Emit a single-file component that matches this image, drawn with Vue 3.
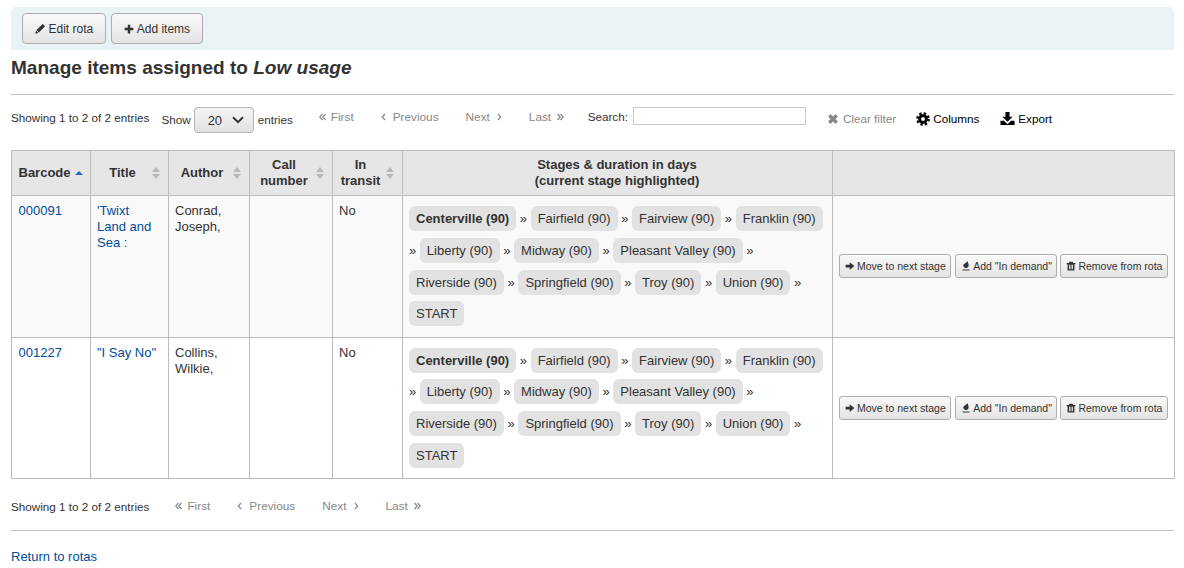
<template>
  <div class="page">
    <div class="toolbar">
      <button class="btn">
        <svg class="ico" viewBox="0 0 16 16"><path d="M11.200 1.300l3.500 3.500-9 9-3.500-3.500zM1.500 11l3.500 3.500-4.600 1.100z" /></svg>
        Edit rota
      </button>
      <button class="btn">
        <svg class="ico" viewBox="0 0 16 16"><path d="M6 1h4v5h5v4h-5v5H6v-5H1V6h5z" /></svg>
        Add items
      </button>
    </div>

    <h1>Manage items assigned to <em>Low usage</em></h1>
    <hr class="rule-top" />

    <div class="controls">
      <div class="info">Showing 1 to 2 of 2 entries</div>
      <label class="show">Show</label>
      <div class="select">
        <span>20</span>
        <svg viewBox="0 0 12 8" width="12" height="8"><path d="M1 1.200l5 5 5-5" fill="none" stroke="#333" stroke-width="2" /></svg>
      </div>
      <label class="entries">entries</label>
      <div class="pager pager-top">
        <a v-for="p in pages" :key="p.label" class="page-link" :class="p.cls">
          <svg v-if="p.before" class="chev" :class="{ wide: p.double }" :viewBox="p.double ? '0 0 7 8' : '0 0 5 8'">
            <path :d="p.d" />
          </svg>
          <span>{{ p.label }}</span>
          <svg v-if="p.after" class="chev" :class="{ wide: p.double }" :viewBox="p.double ? '0 0 7 8' : '0 0 5 8'">
            <path :d="p.d" />
          </svg>
        </a>
      </div>
      <label class="search">Search:</label>
      <input class="search-box" type="text" />
      <a class="tool clear">
        <svg class="ico tool-ico clear-ico" viewBox="0 0 16 16"><path d="M3 3l10 10M13 3L3 13" fill="none" stroke="currentColor" stroke-width="4.600" /></svg>
        Clear filter
      </a>
      <a class="tool columns">
        <svg class="ico tool-ico" viewBox="0 0 16 16">
          <circle cx="8" cy="8" r="5.500" />
          <circle cx="8" cy="8" r="6.400" fill="none" stroke="#000" stroke-width="2.800" stroke-dasharray="2.700 2.330" />
          <circle cx="8" cy="8" r="2.200" fill="#fff" />
        </svg>
        Columns
      </a>
      <a class="tool export">
        <svg class="ico tool-ico export-ico" viewBox="0 0 16 16"><path d="M5.800 1h4.400v5h3.300L8 11.400 2.500 6h3.300zM.5 10.500h3.800L8 14l3.700-3.500h3.800V15H.5z" /></svg>
        Export
      </a>
    </div>

    <table>
      <colgroup>
        <col v-for="w in colWidths" :key="w" :style="{ width: w + 'px' }" />
      </colgroup>
      <thead>
        <tr>
          <th class="left">Barcode <i class="sort-up"></i></th>
          <th class="sortable">Title<span class="sorter"></span></th>
          <th class="sortable">Author<span class="sorter"></span></th>
          <th class="sortable">Call<br />number<span class="sorter"></span></th>
          <th class="sortable">In<br />transit<span class="sorter"></span></th>
          <th class="stages-head">Stages &amp; duration in days<br />(current stage highlighted)</th>
          <th></th>
        </tr>
      </thead>
      <tbody>
        <tr v-for="item in items" :key="item.barcode">
          <td class="first"><a class="link">{{ item.barcode }}</a></td>
          <td><a class="link">{{ item.title }}</a></td>
          <td>{{ item.author }}</td>
          <td></td>
          <td>No</td>
          <td class="stages">
            <template v-for="(s, i) in stages" :key="s">
              <span class="pill" :class="{ current: i === 0 }">{{ s }}</span>
              <template v-if="i < stages.length - 1"> » </template>
            </template>
          </td>
          <td class="actions">
            <button class="btn btn-xs">
              <svg class="ico" viewBox="0 0 16 16"><path d="M1 5.800h6.500V1.800L15 8l-7.500 6.200v-4H1z" /></svg>
              Move to next stage
            </button>
            <button class="btn btn-xs">
              <svg class="ico" viewBox="0 0 16 16"><path d="M10.500 0c.4 3 1.800 4.500 1.800 6.800 0 2.600-2 4.400-4.300 4.400S3.700 9.400 3.700 7.200C3.700 4.500 8 3.500 10.500 0zM2.500 13.500h11V15h-11z" /></svg>
              Add "In demand"
            </button>
            <button class="btn btn-xs">
              <svg class="ico" viewBox="0 0 16 16"><path fill-rule="evenodd" d="M5.500 1h5l1 2H15v2h-1.500v10h-11V5H1V3h3.500zM4.800 6v7h1.400V6zM7.300 6v7h1.400V6zM9.800 6v7h1.400V6z" /></svg>
              Remove from rota
            </button>
          </td>
        </tr>
      </tbody>
    </table>

    <div class="controls-bottom">
      <div class="info">Showing 1 to 2 of 2 entries</div>
      <div class="pager pager-bottom">
        <a v-for="p in pages" :key="p.label" class="page-link" :class="p.cls">
          <svg v-if="p.before" class="chev" :class="{ wide: p.double }" :viewBox="p.double ? '0 0 7 8' : '0 0 5 8'">
            <path :d="p.d" />
          </svg>
          <span>{{ p.label }}</span>
          <svg v-if="p.after" class="chev" :class="{ wide: p.double }" :viewBox="p.double ? '0 0 7 8' : '0 0 5 8'">
            <path :d="p.d" />
          </svg>
        </a>
      </div>
    </div>
    <hr class="rule-bottom" />
    <a class="link back">Return to rotas</a>
  </div>
</template>

<script setup>
const colWidths = [79, 78, 81, 83, 70, 430, 342]

const pages = [
  { label: 'First', before: true, double: true, cls: 'first-page', d: 'M3.500 1L.8 4l2.700 3M6.500 1L3.800 4l2.700 3' },
  { label: 'Previous', before: true, cls: 'prev-page', d: 'M4 1L1.300 4 4 7' },
  { label: 'Next', after: true, cls: 'next-page', d: 'M1 1l2.700 3L1 7' },
  { label: 'Last', after: true, double: true, cls: 'last-page', d: 'M.5 1l2.700 3-2.700 3M3.500 1l2.700 3-2.700 3' }
]

const stages = [
  'Centerville (90)', 'Fairfield (90)', 'Fairview (90)', 'Franklin (90)',
  'Liberty (90)', 'Midway (90)', 'Pleasant Valley (90)',
  'Riverside (90)', 'Springfield (90)', 'Troy (90)', 'Union (90)', 'START'
]

const items = [
  { barcode: '000091', title: "'Twixt Land and Sea :", author: 'Conrad, Joseph,' },
  { barcode: '001227', title: '"I Say No"', author: 'Collins, Wilkie,' }
]
</script>

<style scoped>
.page {
  width: 1184px;
  height: 568px;
  overflow: hidden;
  padding: 7px 10px 0 11px;
  box-sizing: border-box;
  font-family: "Liberation Sans", Arial, sans-serif;
  font-size: 13px;
  color: #333;
  background: #fff;
}

.toolbar {
  display: flex;
  gap: 5.500px;
  height: 43px;
  padding: 6px 11px 0;
  box-sizing: border-box;
  background: #e9f2f4;
  border-radius: 5px 5px 0 0;
}

.toolbar .btn + .btn .ico {
  width: 10px;
  height: 10px;
}

.btn {
  display: inline-flex;
  align-items: center;
  justify-content: center;
  gap: 2.500px;
  height: 31px;
  padding: 0 11.500px 0 12px;
  font-family: inherit;
  font-size: 12px;
  color: #333;
  background: linear-gradient(#f9f9f9, #e4e4e4);
  border: 1px solid #adadad;
  border-radius: 4px;
  white-space: nowrap;
}

.ico {
  width: 11px;
  height: 11px;
  fill: currentColor;
  flex: none;
}

h1 {
  margin: 7px 0 0;
  font-size: 19.050px;
  line-height: 22px;
  font-weight: bold;
  color: #333;
}

.rule-top {
  margin: 15px 0 0;
  border: 0;
  border-top: 1px solid #c0c0c0;
}

.controls {
  display: flex;
  align-items: flex-start;
  height: 55px;
  font-size: 11.700px;
}

.info {
  margin-top: 16px;
  line-height: 14px;
  white-space: nowrap;
}

.show {
  margin: 18px 0 0 12px;
  line-height: 14px;
}

.select {
  display: flex;
  align-items: center;
  justify-content: space-between;
  width: 60px;
  height: 26px;
  margin: 12px 0 0 3px;
  padding: 0 9px 0 13px;
  box-sizing: border-box;
  font-size: 13px;
  background: linear-gradient(#f5f5f5, #e2e2e2);
  border: 1px solid #b8b8b8;
  border-radius: 4px;
}

.entries {
  margin: 18px 0 0 4px;
  line-height: 14px;
}

.pager {
  display: flex;
  gap: 27px;
  font-size: 11.800px;
  line-height: 14px;
}

.pager-top {
  margin: 15px 0 0 26px;
}

.page-link {
  display: flex;
  align-items: center;
  color: #888;
  white-space: nowrap;
}

.chev {
  width: 5px;
  height: 8px;
  fill: none;
  stroke: #888;
  stroke-width: 1.200;
}

.chev.wide {
  width: 7px;
}

.first-page .chev {
  margin-right: 5px;
}

.prev-page .chev {
  margin-right: 7px;
}

.next-page .chev {
  margin-left: 7px;
}

.last-page .chev {
  margin-left: 6px;
}

.search {
  margin: 15px 0 0 23.500px;
  line-height: 14px;
}

.search-box {
  width: 173px;
  height: 18px;
  margin: 12px 0 0 5px;
  padding: 0;
  box-sizing: border-box;
  border: 1px solid #c8c8c8;
  background: #fff;
}

.tool {
  display: inline-flex;
  align-items: center;
  gap: 3px;
  margin-top: 17px;
  line-height: 14px;
  color: #000;
  white-space: nowrap;
}

.tool-ico {
  width: 14px;
  height: 14px;
}

.clear {
  gap: 4px;
  margin-left: 21px;
  color: #888;
}

.clear-ico {
  width: 12px;
  height: 12px;
}

.columns {
  margin-left: 20px;
}

.export {
  margin-left: 21px;
  margin-top: 16px;
}

.export-ico {
  width: 15px;
  height: 15px;
}

table {
  width: 1164px;
  table-layout: fixed;
  border-collapse: collapse;
  line-height: 16px;
}

th,
td {
  border: 1px solid #bcbcbc;
  padding: 7px 7px 7px 6px;
  vertical-align: top;
  font-size: 13px;
}

th {
  position: relative;
  height: 44px;
  padding: 6px;
  box-sizing: border-box;
  vertical-align: middle;
  text-align: center;
  background: #e6e6e6;
}

th.left {
  text-align: left;
  padding-left: 6.500px;
}

th.stages-head {
  padding-right: 7px;
}

td.first {
  padding-left: 6.500px;
}

tbody tr:nth-child(odd) td {
  background: #f9f9f9;
}

.sortable {
  padding-right: 20px;
}

.sort-up {
  display: inline-block;
  width: 0;
  height: 0;
  margin: 0 0 2px 1px;
  border: 4px solid transparent;
  border-top: 0;
  border-bottom: 4px solid #1a6fc4;
}

.sorter {
  position: absolute;
  right: 8px;
  top: 50%;
  width: 8px;
  height: 12px;
  margin-top: -6px;
}

.sorter::before,
.sorter::after {
  content: "";
  position: absolute;
  left: 0;
  border: 4px solid transparent;
}

.sorter::before {
  top: 0;
  border-top: 0;
  border-bottom: 5px solid #b8b8b8;
}

.sorter::after {
  bottom: 0;
  border-bottom: 0;
  border-top: 5px solid #b8b8b8;
}

.link {
  color: #004d99;
}

.stages {
  line-height: 31.750px;
  padding: 7px 6px 6.500px;
}

.pill {
  padding: 5px 7px;
  background: #e2e2e2;
  border-radius: 6px;
  white-space: nowrap;
}

.pill.current {
  font-weight: bold;
}

.actions {
  vertical-align: middle;
  padding: 0 6px 0.500px;
  white-space: nowrap;
}

.btn-xs {
  gap: 2px;
  height: 24px;
  padding: 0 4.500px 0 5px;
  margin-right: 4px;
  font-size: 10.500px;
  border-radius: 3px;
}

.btn-xs:nth-child(2) {
  margin-right: 3px;
}

.btn-xs:last-child {
  margin-right: 0;
}

.btn-xs .ico {
  width: 10px;
  height: 10px;
}

.controls-bottom {
  display: flex;
  align-items: flex-start;
  height: 51px;
  font-size: 11.700px;
}

.controls-bottom .info {
  margin-top: 21px;
}

.pager-bottom {
  margin: 20px 0 0 26px;
}

.rule-bottom {
  margin: 0;
  border: 0;
  border-top: 1px solid #c0c0c0;
}

.back {
  display: block;
  margin-top: 18px;
  line-height: 15px;
}
</style>
